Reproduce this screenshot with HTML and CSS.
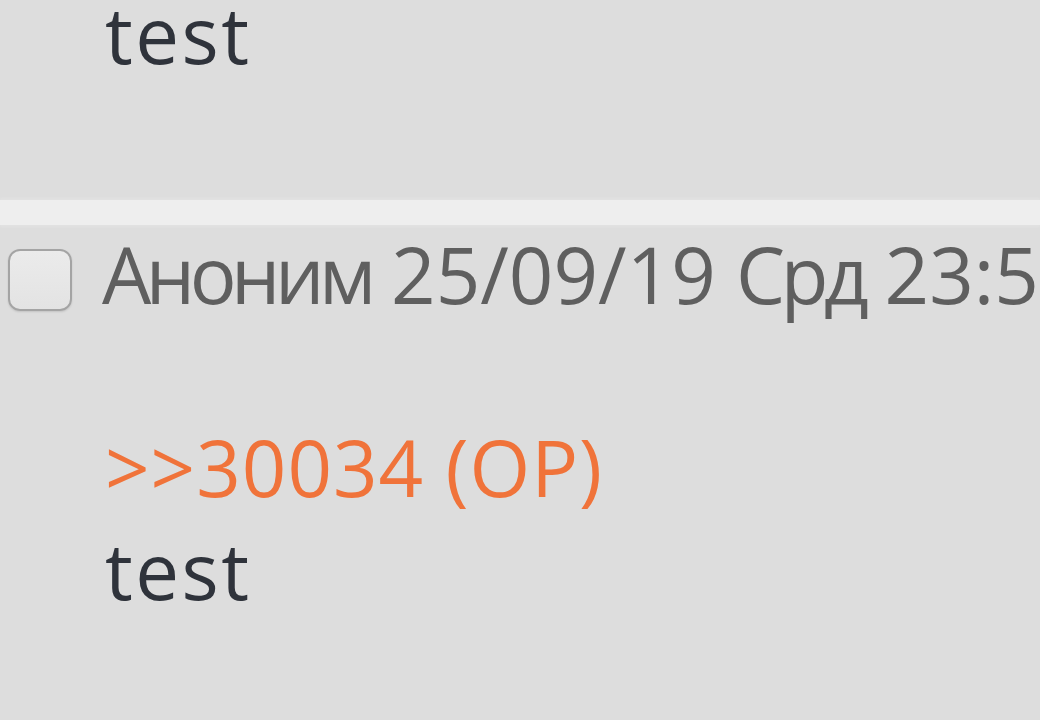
FILE: index.html
```html
<!DOCTYPE html>
<html>
<head>
<meta charset="utf-8">
<link rel="stylesheet" href="styles.css">
</head>
<body>
<div class="page">
  <div class="post prev">
    <div class="msg">test</div>
  </div>
  <div class="sep"></div>
  <div class="post">
    <div class="head">
      <span class="check"></span>
      <span class="meta"><span class="cyr">Аноним</span> 25/09/19 <span class="cyr2">Срд</span> 23:57:14 №30035</span>
    </div>
    <div class="body">
      <a class="reply">&gt;&gt;30034 (OP)</a>
      <div class="msg">test</div>
    </div>
  </div>
</div>
</body>
</html>
```
FILE: styles.css
```css
html, body {
  margin: 0;
  padding: 0;
  background: #dddddd;
  overflow: hidden;
}
.page {
  width: 1040px;
  height: 720px;
  overflow: hidden;
  font-family: "Open Sans", "DejaVu Sans", sans-serif;
  font-size: 78px;
  line-height: 103px;
  color: #333;
}
.post.prev {
  margin-top: -17px;
  padding: 0 0 114px 105px;
}
.msg {
  color: #2f333b;
  letter-spacing: 2.5px;
}
.sep {
  height: 25px;
  background: #eeeeee;
  box-shadow: 0 -2px 2px #e2e2e2, 0 2px 2px #e2e2e2;
}
.post .head {
  display: flex;
  align-items: center;
  white-space: nowrap;
  height: 103px;
  margin-top: -2px;
}
.check {
  flex: none;
  width: 64px;
  height: 62px;
  margin-left: 8px;
  margin-right: 30px;
  margin-top: 10px;
  border: 2px solid #a4a4a4;
  border-radius: 12px;
  background: linear-gradient(#ebebeb, #e3e3e3);
  box-shadow: 0 1px 2px rgba(0,0,0,0.12);
  box-sizing: border-box;
}
.meta {
  color: #5f5f5f;
}
.cyr {
  letter-spacing: -5.5px;
}
.cyr2 {
  letter-spacing: -4.5px;
}
.body {
  padding: 90px 0 0 105px;
}
.reply {
  display: block;
  color: #f0733a;
  text-decoration: none;
  letter-spacing: 1px;
}
```
